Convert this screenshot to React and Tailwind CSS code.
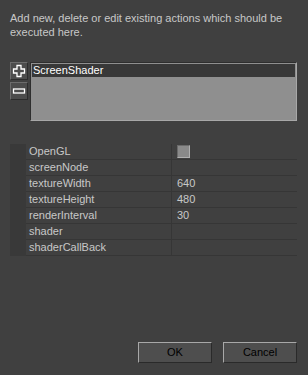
const rows = [
  { name: 'OpenGL', value: 'check' },
  { name: 'screenNode', value: '' },
  { name: 'textureWidth', value: '640' },
  { name: 'textureHeight', value: '480' },
  { name: 'renderInterval', value: '30' },
  { name: 'shader', value: '' },
  { name: 'shaderCallBack', value: '' },
]

function ToolButton({ children }) {
  return (
    <button
      type="button"
      className="flex h-[18px] w-[18px] items-center justify-center border border-t-[#6c6c6c] border-l-[#6c6c6c] border-r-[#2c2c2c] border-b-[#2c2c2c] bg-[#4c4c4c] text-white"
    >
      {children}
    </button>
  )
}

export default function App() {
  return (
    <div
      className="flex h-[375px] w-[308px] flex-col bg-[#404040] text-[11px] text-[#c8c8c8]"
      style={{ fontFamily: '"Liberation Sans", Arial, sans-serif' }}
    >
      <p className="px-[10px] pt-[11px] leading-[14px]">
        Add new, delete or edit existing actions which should be executed here.
      </p>

      <div className="mt-[23px] flex gap-[2px] pl-[10px] pr-[11px]">
        <div className="flex flex-col gap-[2px]">
          <ToolButton>
            <svg width="14" height="14" viewBox="0 0 14 14">
              <path d="M5 1.5h4v3.5h3.5v4H9v3.5H5V9H1.5V5H5z" fill="none" stroke="white" strokeWidth="1.3" />
            </svg>
          </ToolButton>
          <ToolButton>
            <svg width="14" height="14" viewBox="0 0 14 14">
              <rect x="1.5" y="5" width="11" height="4" fill="none" stroke="white" strokeWidth="1.3" />
            </svg>
          </ToolButton>
        </div>
        <div className="h-[59px] flex-1 border border-t-[#2e2e2e] border-l-[#2e2e2e] border-r-[#a8a8a8] border-b-[#a8a8a8] bg-[#8f8f8f] p-[1px]">
          <div className="flex h-[13px] items-center bg-[#383838] pl-[1px] leading-[13px] text-white">ScreenShader</div>
        </div>
      </div>

      <div className="ml-[10px] mr-[11px] mt-[23px] flex">
        <div className="w-[16px] bg-[#393939]" />
        <div className="flex-1">
          {rows.map((row) => (
            <div key={row.name} className="flex h-[16px] border-b border-[#363636]">
              <div className="flex w-[146px] items-center border-r border-[#363636] pl-[3px]">{row.name}</div>
              <div className="flex flex-1 items-center pl-[5px]">
                {row.value === 'check' ? (
                  <div className="h-[13px] w-[13px] border border-t-[#6a6a6a] border-l-[#6a6a6a] border-r-[#b0b0b0] border-b-[#b0b0b0] bg-[#8a8a8a]" />
                ) : (
                  row.value
                )}
              </div>
            </div>
          ))}
        </div>
      </div>

      <div className="mt-auto mb-[12px] flex justify-end gap-[11px] pr-[11px]">
        <button
          type="button"
          className="h-[21px] w-[74px] border border-t-[#a8a8a8] border-l-[#a8a8a8] border-r-[#2a2a2a] border-b-[#2a2a2a] bg-[#4e4e4e] text-[11px] text-black"
        >
          OK
        </button>
        <button
          type="button"
          className="h-[21px] w-[74px] border border-t-[#a8a8a8] border-l-[#a8a8a8] border-r-[#2a2a2a] border-b-[#2a2a2a] bg-[#4e4e4e] text-[11px] text-black"
        >
          Cancel
        </button>
      </div>
    </div>
  )
}
